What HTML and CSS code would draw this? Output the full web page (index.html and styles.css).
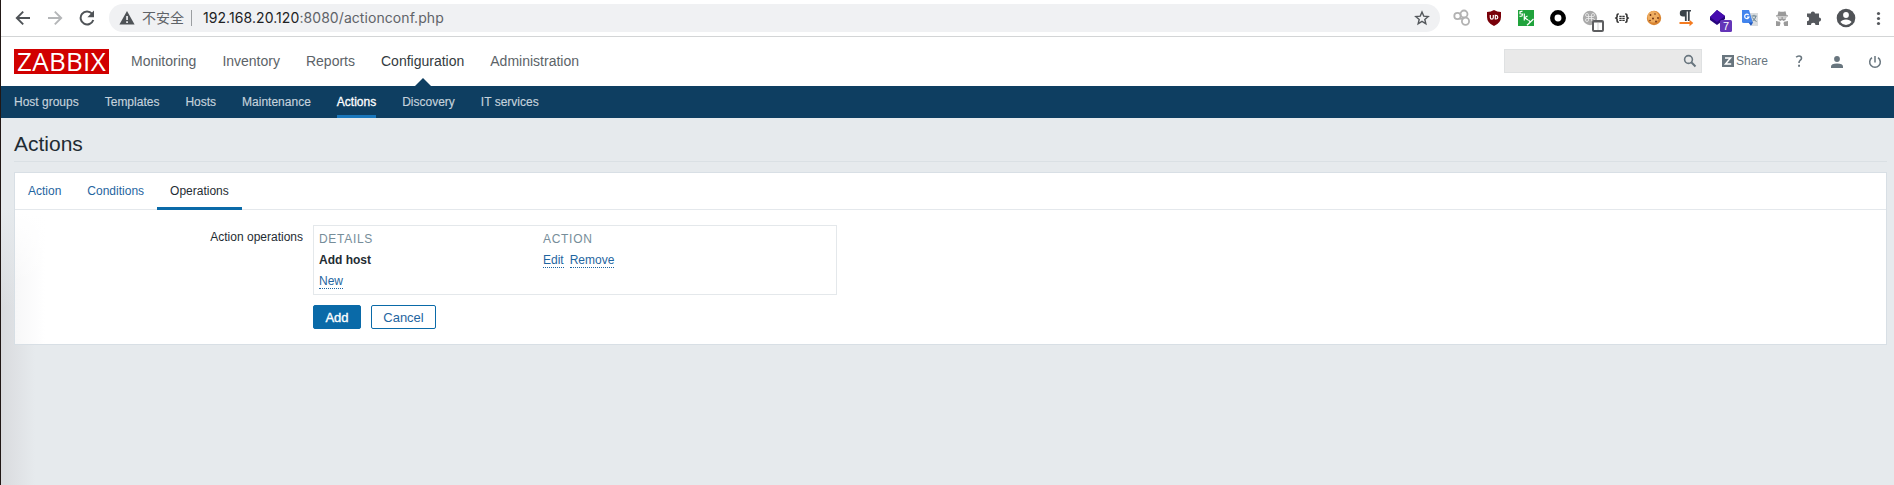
FILE: index.html
```html
<!DOCTYPE html>
<html lang="en">
<head>
<meta charset="utf-8">
<title>Actions</title>
<link rel="stylesheet" href="styles.css">
</head>
<body>
<div class="browser">
  <div class="browser-nav">
    <svg width="16" height="16" viewBox="0 0 16 16" fill="none" stroke="#4f5357" stroke-width="1.9"><path d="M15 8H2.2M8.2 1.6 1.8 8l6.4 6.4"/></svg>
    <svg width="16" height="16" viewBox="0 0 16 16" fill="none" stroke="#b4b6b8" stroke-width="1.9"><path d="M1 8h12.8M7.8 1.6 14.2 8l-6.4 6.4"/></svg>
    <svg width="16" height="16" viewBox="0 0 16 16"><path d="M13 3.6A6.5 6.5 0 1 0 14.3 10" fill="none" stroke="#4f5357" stroke-width="2"/><path d="M15 .6v6.6H8.4z" fill="#4f5357"/></svg>
  </div>
  <div class="address">
    <svg class="warning" width="16" height="14" viewBox="0 0 16 14"><path d="M8 0l7.6 13.6H.4z" fill="#4f5357"/><path d="M7.2 5h1.7v4H7.2zM7.2 10.2h1.7v1.7H7.2z" fill="#f0f1f3"/></svg>
    <span class="insecure">不安全</span>
    <span class="divider"></span>
    <span class="url"><b>192.168.20.120</b>:8080/actionconf.php</span>
    <svg class="star" width="16" height="16" viewBox="0 0 16 16"><path d="M8 2l1.75 4.1 4.45.4-3.4 2.9 1.05 4.4L8 11.4l-3.85 2.4 1.05-4.4-3.4-2.9 4.45-.4z" fill="none" stroke="#54585c" stroke-width="1.4"/></svg>
  </div>
  <div class="extensions">
    <svg width="32" height="36" viewBox="0 0 32 36" fill="none" stroke="#b2b2b2" stroke-width="1.8"><circle cx="11.500" cy="16" r="3.200"/><circle cx="18" cy="14" r="3.500"/><circle cx="19.500" cy="21.300" r="3.600"/><path d="M13.500 18.700h4"/></svg>
    <svg width="32" height="36" viewBox="0 0 32 36"><path d="M16 10q3 2 7 2v5q0 6-7 9-7-3-7-9v-5q4 0 7-2z" fill="#790009"/><path d="M12.300 15v2.500q0 1.700 1.500 1.700t1.500-1.700V15M17.300 15.300v3.700h.700q1.800 0 1.800-1.800t-1.800-1.900z" fill="none" stroke="#fff" stroke-width="1.200"/></svg>
    <svg width="32" height="36" viewBox="0 0 32 36"><path d="M8 10h16v16H8z" fill="#20a33c"/><path d="M12.500 11.200l-2.500.600v2l2.500.200-.500 2-2.500.300M14.300 13.500v7M17.500 16l-3 1.800 3.500 2.200M18.500 20.200l2 2M23.500 19L17 25.300" fill="none" stroke="#fff" stroke-width="1.200"/></svg>
    <svg width="32" height="36" viewBox="0 0 32 36"><circle cx="16" cy="18" r="5.700" fill="#fff" stroke="#000" stroke-width="4.500"/></svg>
    <svg width="32" height="36" viewBox="0 0 32 36"><circle cx="16" cy="18" r="7.200" fill="#aaa"/><path d="M14.500 15v5a1.500 1.500 0 1 1-1.500-1.500h6A1.500 1.500 0 1 1 17.500 20v-5a1.500 1.500 0 1 1 1.500 1.500h-6A1.500 1.500 0 1 1 14.500 15" fill="none" stroke="#eee" stroke-width=".8"/><rect x="18" y="20" width="12" height="12" rx="2" fill="#5d5e60"/><path d="M20 22.500h8V30h-8z" fill="#fff"/><path d="M24 22.500V30" stroke="#bbb" stroke-width=".7"/></svg>
    <svg width="32" height="36" viewBox="0 0 32 36" fill="none" stroke="#333" stroke-width="1.600"><path d="M12.800 14h-.5q-1.200 0-1.200 1v2l-1.200 1.100 1.200 1.100V21q0 1.200 1.200 1.200h.5M19.200 14h.5q1.200 0 1.200 1v2l1.200 1.100-1.200 1.100V21q0 1.200-1.200 1.200h-.5"/><path d="M13.300 16.400h5.400M13.300 18.400h5.400M13.300 20.400h5.400" stroke-width="1.100" stroke-dasharray="2.400 .6"/></svg>
    <svg width="32" height="36" viewBox="0 0 32 36"><circle cx="16" cy="18" r="7.200" fill="#d98532"/><circle cx="15.200" cy="16.800" r="5.800" fill="#efad60"/><g fill="#713311"><circle cx="12.500" cy="15" r=".9"/><circle cx="17" cy="14" r=".8"/><circle cx="20" cy="18" r=".9"/><circle cx="15" cy="18.500" r="1"/><circle cx="18" cy="21.500" r=".9"/><circle cx="12" cy="20.500" r=".8"/></g></svg>
    <svg width="32" height="36" viewBox="0 0 32 36"><path d="M13 10h8v1.600h-1.300V21h-1.800v-9.400h-1.200V21h-1.800v-4.600H13a3.200 3.200 0 0 1 0-6.400z" fill="#3a4249"/><path d="M9.500 22h10v-2.200l3.800 3.200-3.800 3.200V24h-10z" fill="#f47b20"/></svg>
    <svg width="32" height="36" viewBox="0 0 32 36"><path d="M15 10l8 6v3l-8 6-7-5v-3z" fill="#27047d"/><path d="M15 10l8 6-8 6-7-5z" fill="#460baf"/><rect x="18" y="20" width="12" height="12" rx="1.500" fill="#6435b8"/><text x="24" y="30" class="badge-text">7</text></svg>
    <svg width="32" height="36" viewBox="0 0 32 36"><path d="M15 13h9v13h-6z" fill="#d9dcdf"/><path d="M8 10h7l4 13H9.500Q8 23 8 21.500z" fill="#4284ed"/><path d="M14.500 22.500H19L17 26z" fill="#2459ba"/><path d="M14.600 15a2.200 2.200 0 1 0 .4 2h-2" fill="none" stroke="#fff" stroke-width="1.200"/><path d="M17.500 16h5M20 14.800V16M22 16q-1 4-3.500 5M18.500 17.500q1 2.500 4 4" fill="none" stroke="#688391" stroke-width="1"/></svg>
    <svg width="32" height="36" viewBox="0 0 32 36" fill="#9a9a9a"><path d="M12.500 11.200l2 .5h3l2-.500 1 4H22v1.300H10v-1.300h1.500z"/><path d="M11.500 17h9l-1 3-2 1-1.500-1-1.500 1-2-1zM10 21l4 .7.500 1.500-.800 2.800H10zM22 21l-4 .700-.5 1.500.8 2.800H22z"/><path d="M12.500 17.500h3v1h-3zM16.800 17.500h3v1h-3z" fill="#fff"/></svg>
    <svg width="32" height="36" viewBox="0 0 32 36"><path d="M9 13.500h3.800a2.100 2.100 0 1 1 4.200 0h4v4a2.100 2.100 0 1 1 0 4.200V25h-3.500a2.300 2.300 0 0 0-4.600 0H9v-3.800a2.200 2.200 0 0 0 0-4.400z" fill="#55585d"/></svg>
    <svg width="32" height="36" viewBox="0 0 32 36"><circle cx="16" cy="18" r="9.300" fill="#505357"/><circle cx="16" cy="15" r="2.900" fill="#fff"/><path d="M10.400 22q1.600-2.600 5.600-2.600t5.600 2.600q-2 2.900-5.600 2.900T10.400 22z" fill="#fff"/></svg>
    <svg width="32" height="36" viewBox="0 0 32 36" fill="#55585d"><circle cx="16.500" cy="13.500" r="1.600"/><circle cx="16.500" cy="18.500" r="1.600"/><circle cx="16.500" cy="23.500" r="1.600"/></svg>
  </div>
</div>

<div class="page">
  <header class="header">
    <div class="logo"><span>ZABBIX</span></div>
    <nav class="main-nav">
      <a>Monitoring</a><a>Inventory</a><a>Reports</a><a class="selected">Configuration</a><a>Administration</a>
    </nav>
    <div class="search"><svg width="14" height="14" viewBox="0 0 14 14" fill="none" stroke="#68757e"><circle cx="5.500" cy="5.500" r="3.900" stroke-width="1.600"/><path d="M8.300 8.300l4.200 4.200" stroke-width="2"/></svg></div>
    <a class="share"><svg width="12" height="12" viewBox="0 0 12 12"><path d="M0 0h12v12H0z" fill="#68757e"/><path d="M3 3h5.500L3.500 9H9.200" fill="none" stroke="#fff" stroke-width="1.500"/></svg>Share</a>
    <svg class="help" width="8" height="12" viewBox="0 0 8 12"><path d="M1.200 2.300Q2.200 1 4 1q2.500 0 2.500 2.200 0 1.300-1.500 2.300Q4 6.300 4 8" fill="none" stroke="#68757e" stroke-width="1.600"/><path d="M3.100 9.800h1.900v1.900H3.100z" fill="#68757e"/></svg>
    <svg class="user" width="12" height="12" viewBox="0 0 12 12" fill="#68757e"><circle cx="6" cy="3" r="2.900"/><path d="M0 12v-1.500Q0 7.500 6 7.500t6 3V12z"/></svg>
    <svg class="power" width="14" height="14" viewBox="0 0 14 14" fill="none" stroke="#68757e" stroke-width="1.500"><path d="M7 1v6.500M4 2.600a5.300 5.300 0 1 0 6 0"/></svg>
  </header>
  <nav class="sub-nav">
    <a>Host groups</a><a>Templates</a><a>Hosts</a><a>Maintenance</a><a class="selected">Actions</a><a>Discovery</a><a>IT services</a>
  </nav>
  <main class="content">
    <h1>Actions</h1>
    <section class="panel">
      <div class="tabs"><a>Action</a><a>Conditions</a><a class="selected">Operations</a></div>
      <div class="form">
        <div class="label">Action operations</div>
        <div class="field">
          <div class="operations">
            <span class="th">DETAILS</span><span class="th">ACTION</span>
            <b>Add host</b><span class="links"><a>Edit</a><a>Remove</a></span>
            <span class="links"><a>New</a></span>
          </div>
          <div class="buttons"><button class="primary">Add</button><button>Cancel</button></div>
        </div>
      </div>
    </section>
  </main>
</div>
</body>
</html>
```
FILE: styles.css
```css
* { box-sizing: border-box; }
body {
  margin: 0;
  height: 485px;
  overflow: hidden;
  border-left: 1px solid #211715;
  background: #fff;
  color: #1f2c33;
  font: 12px/14px "Liberation Sans", Arial, sans-serif;
  display: flex;
  flex-direction: column;
}
svg { display: block; flex: none; }

.browser { display: flex; align-items: center; height: 37px; border-bottom: 1px solid #d3d5d6; background: #fff; }
.browser-nav { display: flex; gap: 16px; padding-left: 14px; width: 108px; flex: none; }
.address { display: flex; align-items: center; width: 1331px; height: 28px; border-radius: 14px; background: #f0f1f3; padding: 0 10px; flex: none; }
.insecure { margin: 0 0 2px 7px; font: 14px/20px "Noto Sans CJK SC", sans-serif; color: #5f6368; width: 42px; }
.divider { width: 1px; height: 16px; margin: 0 11px 0 7px; background: #9b9ea1; }
.url { font: 14px/20px Inter, sans-serif; color: #5f6368; letter-spacing: .07px; white-space: nowrap; }
.url b { font-weight: 400; color: #202124; }
.star { margin-left: auto; }
.extensions { display: flex; margin-left: 6px; }
.badge-text { font: 11px "Liberation Sans", sans-serif; fill: #fff; text-anchor: middle; }

.page { flex: 1; display: flex; flex-direction: column; background: #e6eaed; }
.header { display: flex; align-items: center; height: 49px; padding-left: 13px; background: #fff; flex: none; }
.logo { width: 95px; height: 25px; background: #d10000; color: #fff; display: flex; align-items: center; justify-content: center; font: 26px/25px "Open Sans", sans-serif; letter-spacing: .3px; flex: none; }
.main-nav { display: flex; gap: 26px; margin-left: 22px; font-size: 14px; color: #5c6368; height: 49px; line-height: 49px; }
.main-nav .selected { color: #343b40; position: relative; }
.main-nav .selected::after { content: ""; position: absolute; left: 50%; bottom: 0; margin-left: -8px; border: 8px solid transparent; border-top: 0; border-bottom-color: #0e3e61; }
.search { margin: 0 0 1px auto; width: 198px; height: 24px; border: 1px solid #dfe1e2; background: #e9e9e9; display: flex; align-items: center; justify-content: flex-end; padding-right: 4px; }
.share { display: flex; gap: 2px; align-items: center; margin: 0 0 1px 20px; color: #68757e; width: 47px; }
.help { margin: 0 0 1px 26px; }
.user { margin-left: 28px; }
.power { margin-left: 25px; margin-right: 12px; }

.sub-nav { display: flex; gap: 26px; height: 32px; line-height: 33px; padding-left: 13px; background: #0e3e61; color: #c5d2dc; flex: none; }
.sub-nav a { height: 32px; -webkit-text-stroke: .15px; }
.sub-nav .selected { color: #fff; border-bottom: 3px solid #1a77bc; -webkit-text-stroke: .3px; }

.content { flex: 1; padding: 0 7px 0 13px; background: linear-gradient(#e6eaed 90px, rgba(230, 234, 237, 0) 190px), linear-gradient(90deg, rgba(190, 186, 190, .32), transparent 34px); }
h1 { margin: 0; height: 44px; border-bottom: 1px solid #dae0e4; font-size: 21px; line-height: 51px; font-weight: 400; }
.panel { margin-top: 10px; height: 173px; border: 1px solid #d8dfe5; background: linear-gradient(#fff 40px, rgba(255, 255, 255, 0) 110px), linear-gradient(90deg, #f7f7f8, #fff 30px); }
.tabs { display: flex; height: 37px; line-height: 37px; border-bottom: 1px solid #e4e8ec; background: #fff; color: #1f65a0; }
.tabs a { height: 37px; padding: 0 13px; }
.tabs .selected { color: #1f2c33; border-bottom: 3px solid #0a6aa8; }
.form { display: flex; padding-top: 15px; }
.label { width: 288px; text-align: right; padding-top: 5px; }
.field { margin-left: 10px; }
.operations { display: grid; grid-template-columns: 224px 1fr; grid-template-rows: repeat(3, 21px); width: 524px; height: 70px; padding: 3px 5px; border: 1px solid #e4e8eb; line-height: 21px; }
.th { color: #768d99; letter-spacing: .7px; }
.links { display: flex; gap: 6px; align-items: center; }
.links a { height: 15px; line-height: 14px; color: #1f65a0; border-bottom: 1px dotted #1f65a0; }
.buttons { display: flex; gap: 10px; margin-top: 10px; }
button { width: 65px; height: 24px; padding: 1px 0 0; border: 1px solid #0a6aa8; border-radius: 2px; background: #fff; color: #1f65a0; font: 13px/21px "Liberation Sans", Arial, sans-serif; }
.primary { width: 48px; background: #0a6aa8; color: #fff; -webkit-text-stroke: .35px; }
```
